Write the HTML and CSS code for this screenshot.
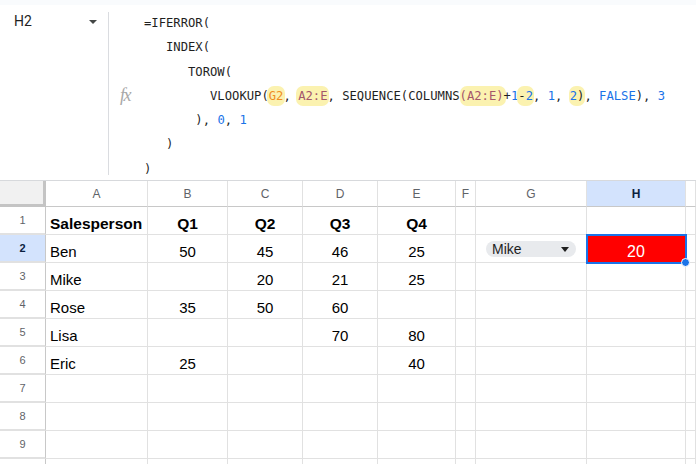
FILE: index.html
```html
<!DOCTYPE html>
<html>
<head>
<meta charset="utf-8">
<link rel="stylesheet" href="styles.css">
</head>
<body>
<div class="formula-area">
  <div class="namebox">
    <span class="ref">H2</span>
    <span class="caret"></span>
  </div>
  <div class="divider"></div>
  <div class="fx">fx</div>
  <pre class="formula">=IFERROR(
   INDEX(
      TOROW(
         VLOOKUP(<span class="hl g2">G2</span>, <span class="hl rng">A2:E</span>, SEQUENCE(COLUMNS<span class="hl hp rng">(A2:E)</span>+<span class="num">1</span><span class="hl hs">-<span class="num">2</span></span>, <span class="num">1</span>, <span class="hl hs"><span class="num">2</span>)</span>, <span class="num">FALSE</span>), <span class="num">3</span>
       ), <span class="num">0</span>, <span class="num">1</span>
   )
)</pre>
</div>

<div class="sheet">
  <div class="corner"></div>
  <div class="ch">A</div><div class="ch">B</div><div class="ch">C</div><div class="ch">D</div><div class="ch">E</div><div class="ch">F</div><div class="ch">G</div><div class="ch ch-sel">H</div><div class="ch"></div>

  <div class="rh">1</div>
  <div class="c b">Salesperson</div><div class="c b m">Q1</div><div class="c b m">Q2</div><div class="c b m">Q3</div><div class="c b m">Q4</div><div class="c"></div><div class="c"></div><div class="c"></div><div class="c"></div>

  <div class="rh rh-sel">2</div>
  <div class="c">Ben</div><div class="c m">50</div><div class="c m">45</div><div class="c m">46</div><div class="c m">25</div><div class="c"></div>
  <div class="c chipcell"><div class="chip"><span>Mike</span><span class="chip-caret"></span></div></div>
  <div class="c sel">20<span class="handle"></span></div><div class="c"></div>

  <div class="rh">3</div>
  <div class="c">Mike</div><div class="c m"></div><div class="c m">20</div><div class="c m">21</div><div class="c m">25</div><div class="c"></div><div class="c"></div><div class="c"></div><div class="c"></div>

  <div class="rh">4</div>
  <div class="c">Rose</div><div class="c m">35</div><div class="c m">50</div><div class="c m">60</div><div class="c m"></div><div class="c"></div><div class="c"></div><div class="c"></div><div class="c"></div>

  <div class="rh">5</div>
  <div class="c">Lisa</div><div class="c m"></div><div class="c m"></div><div class="c m">70</div><div class="c m">80</div><div class="c"></div><div class="c"></div><div class="c"></div><div class="c"></div>

  <div class="rh">6</div>
  <div class="c">Eric</div><div class="c m">25</div><div class="c m"></div><div class="c m"></div><div class="c m">40</div><div class="c"></div><div class="c"></div><div class="c"></div><div class="c"></div>

  <div class="rh">7</div>
  <div class="c"></div><div class="c"></div><div class="c"></div><div class="c"></div><div class="c"></div><div class="c"></div><div class="c"></div><div class="c"></div><div class="c"></div>

  <div class="rh">8</div>
  <div class="c"></div><div class="c"></div><div class="c"></div><div class="c"></div><div class="c"></div><div class="c"></div><div class="c"></div><div class="c"></div><div class="c"></div>

  <div class="rh">9</div>
  <div class="c"></div><div class="c"></div><div class="c"></div><div class="c"></div><div class="c"></div><div class="c"></div><div class="c"></div><div class="c"></div><div class="c"></div>

  <div class="rh"></div>
  <div class="c"></div><div class="c"></div><div class="c"></div><div class="c"></div><div class="c"></div><div class="c"></div><div class="c"></div><div class="c"></div><div class="c"></div>
</div>
</body>
</html>
```

FILE: styles.css
```css
* { box-sizing: border-box; }
html, body { margin: 0; padding: 0; }
body {
  width: 696px;
  height: 464px;
  overflow: hidden;
  background: #fff;
  font-family: "Liberation Sans", Arial, sans-serif;
  color: #000;
}

.formula-area {
  position: relative;
  height: 180px;
  background: #fff;
  border-top: 5px solid #f9fbfd;
  display: flex;
}

.namebox {
  width: 108px;
  display: flex;
  align-items: flex-start;
  justify-content: space-between;
  padding: 8px 11px 0 14px;
  font-family: Roboto, "Liberation Sans", sans-serif;
  font-size: 14px;
  color: #1f1f1f;
}
.namebox .ref { line-height: 17px; }
.caret {
  margin-top: 7px;
  width: 0; height: 0;
  border-left: 4px solid transparent;
  border-right: 4px solid transparent;
  border-top: 4px solid #444746;
}

.divider {
  width: 1px;
  margin-top: 7px;
  height: 163px;
  background: #dadce0;
}

.fx {
  width: 35px;
  padding: 80px 0 0 11px;
  font-family: "Liberation Serif", serif;
  font-style: italic;
  font-size: 18px;
  color: #a8a8a8;
  letter-spacing: -1.5px;
}

.formula {
  margin: 0;
  padding-top: 6px;
  font-family: "DejaVu Sans Mono", "Liberation Mono", monospace;
  font-size: 12.2px;
  line-height: 24.3px;
  color: #1f1f1f;
  white-space: pre;
}
.num { color: #1a73e8; }
.hl {
  background: #fbf2b0;
  border-radius: 7px;
  padding: 3px 2px;
  margin: 0 -2px;
}
.hs {
  padding: 3px 1px;
  margin: 0 -1px;
}
.hp {
  padding-left: 0;
  margin-left: 0;
}
.g2 { color: #ef8f1f; }
.rng { color: #a4566b; }

.sheet {
  display: grid;
  grid-template-columns: 46px 102px 80px 75px 75px 78px 20px 111px 99px 10px;
  grid-template-rows: 26px repeat(10, 28px);
  border-top: 1px solid #d7d9dc;
}

.corner {
  background: #f1f1f1;
  border-right: 3px solid #c4c4c4;
  border-bottom: 3px solid #c4c4c4;
}

.ch {
  display: flex;
  align-items: center;
  justify-content: center;
  font-size: 12px;
  color: #5f6368;
  border-right: 1px solid #e1e1e1;
  border-bottom: 1px solid #c8c8c8;
  padding-top: 1px;
}
.ch-sel {
  background: #d3e3fd;
  color: #0b1f3f;
  font-weight: bold;
}

.rh {
  display: flex;
  align-items: center;
  justify-content: center;
  font-size: 11px;
  color: #5f6368;
  border-right: 1px solid #c8c8c8;
  border-bottom: 2px solid #e1e1e1;
}
.rh-sel {
  background: #d3e3fd;
  color: #0b1f3f;
  font-weight: bold;
}

.c {
  position: relative;
  display: flex;
  align-items: flex-end;
  padding: 0 4px 1px 4px;
  font-size: 15px;
  line-height: 18px;
  border-right: 1px solid #e1e1e1;
  border-bottom: 1px solid #e1e1e1;
  white-space: nowrap;
}
.c.m { justify-content: center; }
.c.b { font-weight: bold; font-size: 15.5px; }

.chipcell {
  align-items: center;
  padding: 0 10px 0 10px;
}
.chip {
  flex: 1;
  height: 16px;
  border-radius: 8px;
  background: #e8eaed;
  display: flex;
  align-items: center;
  justify-content: space-between;
  padding: 0 7px 0 6px;
  font-size: 14px;
  color: #1f1f1f;
  margin-top: 1px;
}
.chip-caret {
  width: 0; height: 0;
  border-left: 4.5px solid transparent;
  border-right: 4.5px solid transparent;
  border-top: 5px solid #1f1f1f;
}

.sel {
  background: #ff0000;
  color: #fff;
  justify-content: center;
  font-size: 16px;
  outline: 2px solid #1a73e8;
  outline-offset: -1px;
  z-index: 2;
}
.handle {
  position: absolute;
  right: -5px;
  bottom: -5px;
  width: 9px;
  height: 9px;
  border-radius: 50%;
  background: #1a73e8;
  border: 1px solid #fff;
}
```
